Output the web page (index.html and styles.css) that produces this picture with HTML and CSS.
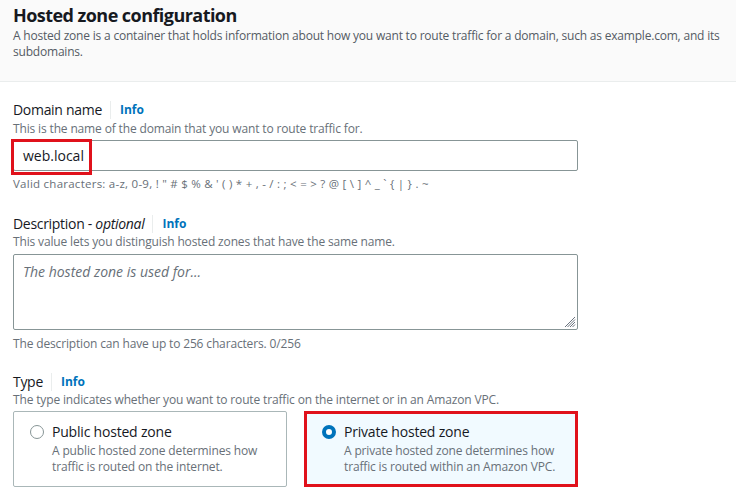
FILE: index.html
```html
<!DOCTYPE html>
<html>
<head>
<meta charset="utf-8">
<link rel="stylesheet" href="styles.css">
</head>
<body>
<div class="panel">
  <header class="head">
    <h2 class="title">Hosted zone configuration</h2>
    <p class="head-desc">A hosted zone is a container that holds information about how you want to route traffic for a domain, such as example.com, and its subdomains.</p>
  </header>
  <div class="content">
    <div class="field f-domain">
      <div class="label-row"><span class="label">Domain name</span><span class="info">Info</span></div>
      <div class="hint">This is the name of the domain that you want to route traffic for.</div>
      <div class="input">
        <span class="input-text">web.local</span>
        <span class="highlight hl-input"></span>
      </div>
      <div class="constraint">Valid characters: a-z, 0-9, ! " # $ % &amp; ' ( ) * + , - / : ; &lt; = &gt; ? @ [ \ ] ^ _ ` { | } . ~</div>
    </div>
    <div class="field f-desc">
      <div class="label-row"><span class="label">Description - <em>optional</em></span><span class="info">Info</span></div>
      <div class="hint">This value lets you distinguish hosted zones that have the same name.</div>
      <div class="textarea">
        <span class="placeholder">The hosted zone is used for...</span>
        <svg class="grip" width="12" height="12" viewBox="0 0 12 12"><path d="M11 1 L1 11 M11 3.5 L3.5 11 M11 6 L6 11 M11 8.5 L8.5 11" stroke="#6b7480" stroke-width="1" fill="none"/></svg>
      </div>
      <div class="count">The description can have up to 256 characters. 0/256</div>
    </div>
    <div class="field f-type">
      <div class="label-row"><span class="label">Type</span><span class="info">Info</span></div>
      <div class="hint">The type indicates whether you want to route traffic on the internet or in an Amazon VPC.</div>
      <div class="tiles">
        <div class="tile">
          <span class="radio"></span>
          <div class="tile-body">
            <div class="tile-title">Public hosted zone</div>
            <div class="tile-desc">A public hosted zone determines how traffic is routed on the internet.</div>
          </div>
        </div>
        <div class="tile tile-on">
          <span class="radio radio-on"></span>
          <div class="tile-body">
            <div class="tile-title">Private hosted zone</div>
            <div class="tile-desc">A private hosted zone determines how traffic is routed within an Amazon VPC.</div>
          </div>
          <span class="highlight hl-tile"></span>
        </div>
      </div>
    </div>
  </div>
</div>
</body>
</html>
```

FILE: styles.css
```css
* { box-sizing: border-box; }
html, body { margin: 0; padding: 0; background: #ffffff; }
body {
  font-family: "Open Sans", "Noto Sans", Arial, sans-serif;
  color: #16191f;
  width: 736px;
  height: 498px;
  overflow: hidden;
}
.head {
  background: #fafafa;
  border-bottom: 1px solid #eaeded;
  padding: 3px 13px 0;
  height: 82px;
}
.title {
  margin: 0;
  font-size: 18px;
  font-weight: 700;
  line-height: 24px;
  color: #16191f;
  letter-spacing: -0.55px;
}
.head-desc {
  margin: 1px 0 0;
  font-size: 12px;
  line-height: 16px;
  color: #545b64;
  letter-spacing: -0.2px;
}
.content {
  padding: 18px 13px 0 13px;
  display: flex;
  flex-direction: column;
}
.field { display: flex; flex-direction: column; width: 565px; }
.f-desc { margin-top: 22px; }
.f-type { margin-top: 20px; }
.label-row { display: flex; align-items: center; height: 20px; }
.label { font-size: 14px; line-height: 20px; color: #16191f; letter-spacing: -0.3px; }
.label em { font-style: italic; }
.info {
  font-size: 12px;
  font-weight: 700;
  color: #0073bb;
  border-left: 1px solid #eaeded;
  margin-left: 8px;
  padding-left: 9px;
  line-height: 18px;
}
.hint {
  font-size: 12px;
  line-height: 16px;
  color: #687078;
  margin-top: 0;
  letter-spacing: -0.15px;
}
.f-domain .hint { margin-top: 1px; }
.input {
  position: relative;
  margin-top: 3px;
  height: 31px;
  border: 1px solid #879596;
  border-radius: 2px;
  display: flex;
  align-items: center;
  padding-left: 9px;
}
.input-text { font-size: 14px; color: #16191f; }
.highlight {
  position: absolute;
  border: 3px solid #e0111b;
  pointer-events: none;
}
.hl-input { left: -3px; top: -2px; width: 81px; height: 36px; }
.constraint {
  font-size: 11.5px;
  line-height: 16px;
  color: #687078;
  margin-top: 5px;
  letter-spacing: 0.25px;
}
.textarea {
  position: relative;
  margin-top: 4px;
  height: 76px;
  border: 1px solid #879596;
  border-radius: 2px;
  padding: 5px 9px;
}
.placeholder { font-size: 14px; font-style: italic; color: #687078; }
.grip { position: absolute; right: 1px; bottom: 1px; }
.count {
  font-size: 12px;
  line-height: 16px;
  color: #687078;
  margin-top: 6px;
  letter-spacing: -0.15px;
}
.tiles {
  display: grid;
  grid-template-columns: 274px 273px;
  column-gap: 18px;
  margin-top: 3px;
}
.tile {
  position: relative;
  height: 76px;
  border: 1px solid #aab7b8;
  border-radius: 2px;
  display: flex;
  padding: 10px 12px 0 16px;
  gap: 8px;
}
.tile-on { background: #f1faff; border-color: #0073bb; }
.radio {
  flex: none;
  width: 14px;
  height: 14px;
  border-radius: 50%;
  border: 1.5px solid #879596;
  margin-top: 3px;
  background: #fff;
}
.radio-on { border: 4px solid #0073bb; }
.tile-title { font-size: 14px; line-height: 20px; color: #16191f; letter-spacing: -0.2px; }
.tile-desc { font-size: 12px; line-height: 16px; color: #687078; margin-top: 1px; letter-spacing: -0.15px; }
.hl-tile { left: -2px; top: -1px; right: -1px; bottom: -1px; }
```
